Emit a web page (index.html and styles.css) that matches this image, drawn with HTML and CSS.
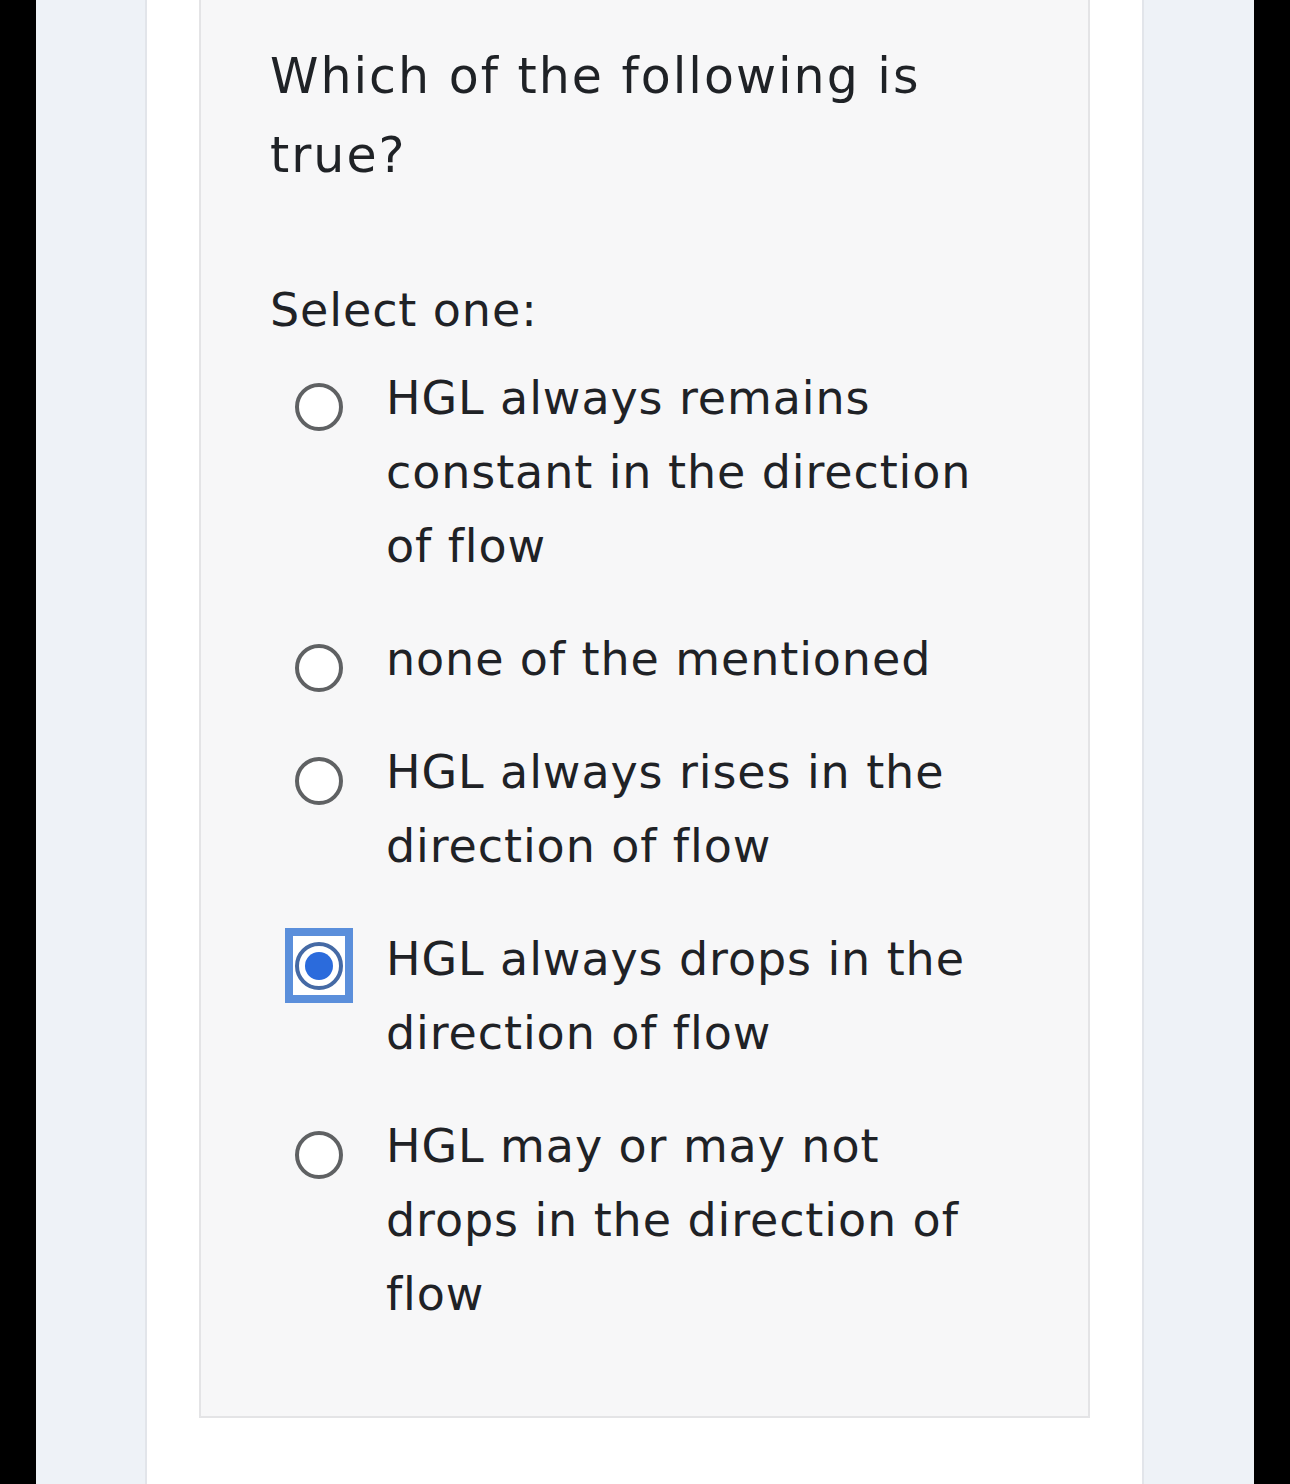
FILE: index.html
```html
<!DOCTYPE html>
<html>
<head>
<meta charset="utf-8">
<link rel="stylesheet" href="styles.css">
</head>
<body>
<div class="page">
  <div class="panel">
    <div class="card">
      <div class="qtext">Which of the following is true?</div>
      <div class="prompt">Select one:</div>
      <div class="answers">
        <div class="option"><span class="radio"></span><span class="label">HGL always remains constant in the direction of flow</span></div>
        <div class="option"><span class="radio"></span><span class="label">none of the mentioned</span></div>
        <div class="option"><span class="radio"></span><span class="label">HGL always rises in the direction of flow</span></div>
        <div class="option"><span class="focus"><span class="radio checked"></span></span><span class="label">HGL always drops in the direction of flow</span></div>
        <div class="option"><span class="radio"></span><span class="label">HGL may or may not drops in the direction of flow</span></div>
      </div>
    </div>
  </div>
</div>
</body>
</html>
```

FILE: styles.css
```css
html, body {
  margin: 0;
  padding: 0;
  background: #000;
  height: 1484px;
  overflow: hidden;
}
.page {
  margin: 0 36px;
  height: 1484px;
  background: #eef2f7;
  padding: 0 110px 0 109px;
  box-sizing: border-box;
}
.panel {
  height: 100%;
  background: #fff;
  border-left: 2px solid #e2e5ea;
  border-right: 2px solid #e2e5ea;
  padding: 0 52px;
}
.card {
  background: #f7f7f8;
  border: 2px solid #e4e4e6;
  border-top: none;
  padding: 37px 70px 85px 69px;
  font-family: "DejaVu Sans", sans-serif;
  color: #1f2226;
}
.qtext {
  font-size: 49px;
  letter-spacing: 2px;
  line-height: 79px;
  width: 700px;
}
.prompt {
  font-size: 46px;
  letter-spacing: 0.9px;
  line-height: 74px;
  margin-top: 78px;
}
.answers {
  margin-top: 14px;
  padding-left: 25px;
}
.option {
  display: flex;
  align-items: flex-start;
  font-size: 46px;
  letter-spacing: 0.9px;
  line-height: 74px;
  margin-bottom: 39px;
}
.option:last-child { margin-bottom: 0; }
.radio {
  flex: none;
  width: 48px;
  height: 48px;
  box-sizing: border-box;
  border: 4px solid #5f6163;
  border-radius: 50%;
  background: #fff;
  margin-top: 22px;
  position: relative;
}
.focus {
  flex: none;
  display: flex;
  align-items: center;
  justify-content: center;
  width: 68px;
  height: 75px;
  box-sizing: border-box;
  border: 8px solid #5b8fdb;
  background: #fff;
  margin: 6px -10px 0 -10px;
}
.focus .radio { margin-top: 0; border-color: #456aa5; }
.radio.checked::after {
  content: "";
  position: absolute;
  left: 6px;
  top: 6px;
  width: 28px;
  height: 28px;
  border-radius: 50%;
  background: #2b6bdc;
}
.label {
  margin-left: 43px;
  width: 620px;
}
```
